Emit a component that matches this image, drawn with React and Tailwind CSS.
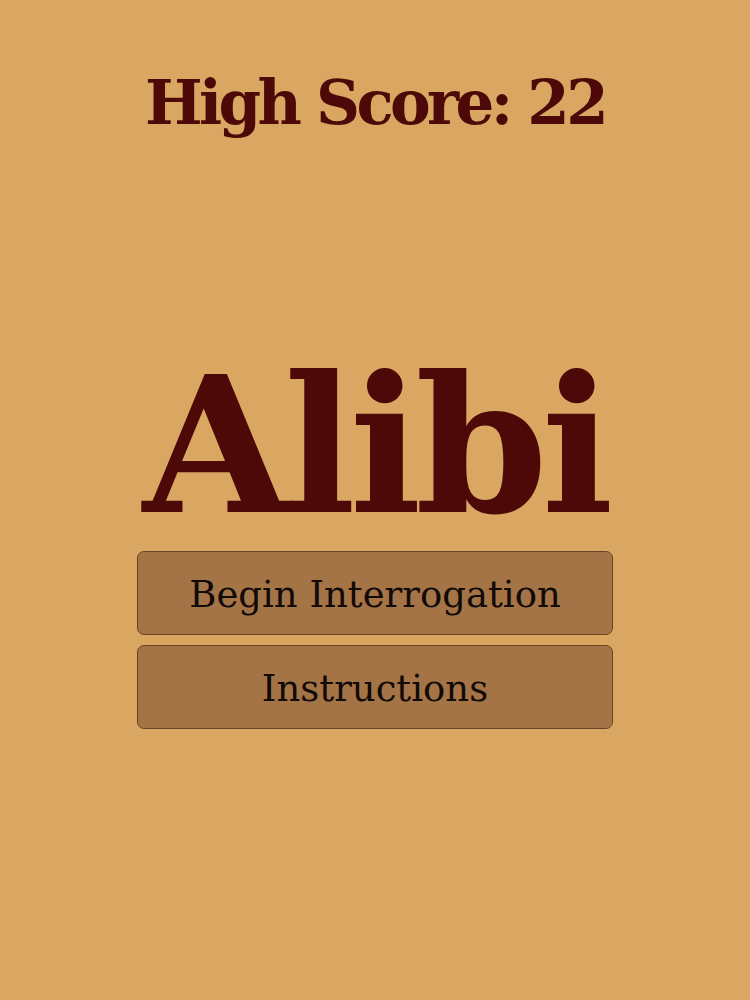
export default function App() {
  const serif = { fontFamily: '"DejaVu Serif", "Liberation Serif", serif' };
  return (
    <div className="w-[750px] h-[1000px] bg-[#d9a762] flex flex-col items-center" style={serif}>
      <h2 className="mt-[72px] text-[61px] leading-[1] text-[#4d0808] font-bold tracking-[-3.6px]">High Score: 22</h2>
      <h1 className="mt-[218px] text-[190px] leading-[1] text-[#4d0808] font-bold tracking-[-6.5px]">Alibi</h1>
      <div className="mt-[10px] w-[476px] flex flex-col gap-[10px]">
        <button className="h-[84px] w-full pt-[4px] rounded-[7px] border border-[#6b4523] bg-[#a47447] text-[37px] text-[#120a06]">
          Begin Interrogation
        </button>
        <button className="h-[84px] w-full pt-[4px] rounded-[7px] border border-[#6b4523] bg-[#a47447] text-[37px] text-[#120a06]">
          Instructions
        </button>
      </div>
    </div>
  );
}
